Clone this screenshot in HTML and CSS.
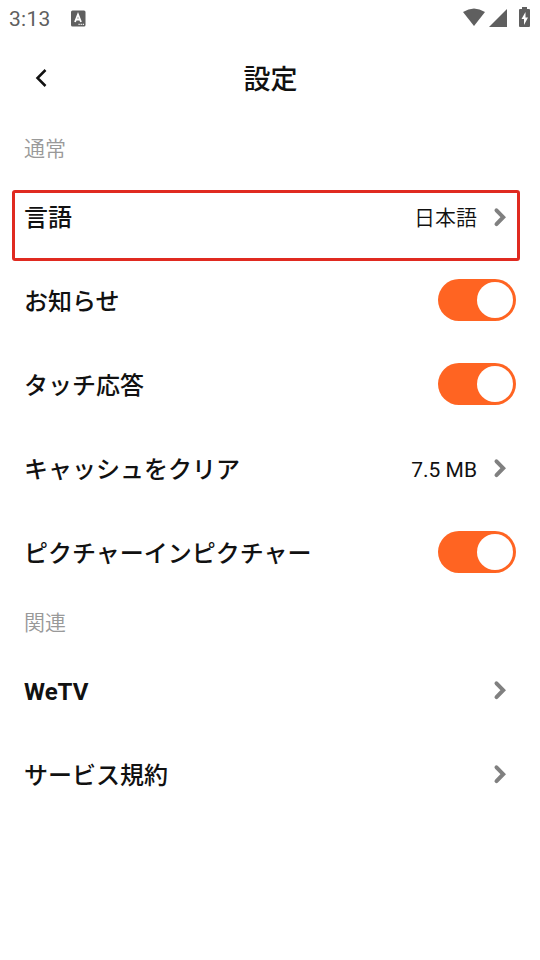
FILE: index.html
```html
<!DOCTYPE html>
<html lang="ja">
<head>
	<meta charset="utf-8">
	<meta name="viewport" content="width=device-width, initial-scale=1">
	<title>設定</title>
	<link rel="stylesheet" href="styles.css">
</head>
<body>

	<div class="status">
		<span class="time">3:13</span>
		<svg class="notice" width="16" height="17" viewBox="0 0 16 17">
			<rect x="0" y="0.5" width="14.500" height="16" rx="1.500" fill="#5f5f5f"/>
			<path d="M4 12L7 4.500L10 12M5 9.500H9" fill="none" stroke="#fff" stroke-width="1.8"/>
			<path d="M7.500 14.300H13.500" stroke="#fff" stroke-width="1.2" stroke-dasharray="1.2 0.9"/>
		</svg>
		<svg class="signals" width="70" height="22" viewBox="0 0 70 22">
			<path d="M0 6Q11 -1 22 6L11 20Z" fill="#5f5f5f"/>
			<path d="M44 3V21H26Z" fill="#5f5f5f"/>
			<path d="M59 1H64V3H66Q67 3 67 4V20Q67 21 66 21H57Q56 21 56 20V4Q56 3 57 3H59Z" fill="#5f5f5f"/>
			<path d="M62.500 6L58.500 13H61V19L65 11.500H62.500Z" fill="#fff"/>
		</svg>
	</div>

	<header>
		<svg class="back" width="14" height="20" viewBox="0 0 14 20"><path d="M11.500 2L3.500 10L11.500 18"/></svg>
		<h1>設定</h1>
	</header>

	<main>
		<h2>通常</h2>
		<div class="row marked">
			<span class="label">言語</span>
			<span class="value">日本語</span>
			<svg class="arrow" width="14" height="20" viewBox="0 0 14 20"><path d="M3.500 3.300L10.200 10.200L3.500 17.100"/></svg>
		</div>
		<div class="row">
			<span class="label">お知らせ</span>
			<span class="switch"></span>
		</div>
		<div class="row">
			<span class="label">タッチ応答</span>
			<span class="switch"></span>
		</div>
		<div class="row">
			<span class="label">キャッシュをクリア</span>
			<span class="value size">7.5 MB</span>
			<svg class="arrow" width="14" height="20" viewBox="0 0 14 20"><path d="M3.500 3.300L10.200 10.200L3.500 17.100"/></svg>
		</div>
		<div class="row">
			<span class="label">ピクチャーインピクチャー</span>
			<span class="switch"></span>
		</div>
		<h2 class="related">関連</h2>
		<div class="row">
			<span class="label latin">WeTV</span>
			<svg class="arrow" width="14" height="20" viewBox="0 0 14 20"><path d="M3.500 3.300L10.200 10.200L3.500 17.100"/></svg>
		</div>
		<div class="row">
			<span class="label">サービス規約</span>
			<svg class="arrow" width="14" height="20" viewBox="0 0 14 20"><path d="M3.500 3.300L10.200 10.200L3.500 17.100"/></svg>
		</div>
	</main>

</body>
</html>
```

FILE: styles.css
```css
*{
	box-sizing: border-box;
	padding: 0;
	margin: 0;
}
body
{
	background:#fff;
	color:#111;
	font-family: Roboto, "Noto Sans CJK JP", sans-serif;
}
svg
{
	display:block;
	flex:none;
}
.status
{
	height:36px;
	padding:0 7px 0 9px;
	display:flex;
	align-items:center;
	color:#5f5f5f;
}
.time
{
	font-size:21px;
	font-weight:450;
	letter-spacing:0.3px;
	padding-top:2px;
	width:62px;
}
.signals
{
	margin-left:auto;
	margin-top:-2px;
}
header
{
	height:84px;
	display:grid;
	grid-template-columns:60px 1fr 60px;
	align-items:center;
}
.back
{
	margin-left:34px;
}
.back path
{
	fill:none;
	stroke:#111;
	stroke-width:2.5;
}
h1
{
	font-size:27px;
	font-weight:500;
	line-height:40px;
	padding:4px 0 0 1px;
	text-align:center;
}
h2
{
	height:55px;
	padding:0 24px;
	font-size:21px;
	font-weight:350;
	line-height:59px;
	color:#999;
}
.row
{
	height:84px;
	padding:0 24px;
	display:flex;
	align-items:center;
}
.label
{
	font-size:24px;
	font-weight:500;
	line-height:36px;
	padding-top:3px;
	margin-right:auto;
}
.latin
{
	font-weight:700;
}
.value
{
	font-size:21px;
	font-weight:350;
	line-height:30px;
	padding-top:3px;
	margin-right:16px;
}
.size
{
	font-weight:400;
}
.arrow
{
	margin-right:9px;
}
.arrow path
{
	fill:none;
	stroke:#808080;
	stroke-width:4;
	stroke-linecap:round;
}
.marked
{
	height:71px;
	margin:15px 20px 0 12px;
	padding:0 1px 18px 9px;
	border:3px solid #e02a20;
	border-radius:3px;
	margin-bottom:-3px;
}
.switch
{
	width:78px;
	height:42px;
	border-radius:21px;
	background:#ff6422;
	padding:3px;
}
.switch::after
{
	content:"";
	display:block;
	width:36px;
	height:36px;
	margin-left:auto;
	border-radius:50%;
	background:#fff;
}
.related
{
	height:54px;
	line-height:58px;
}
```
